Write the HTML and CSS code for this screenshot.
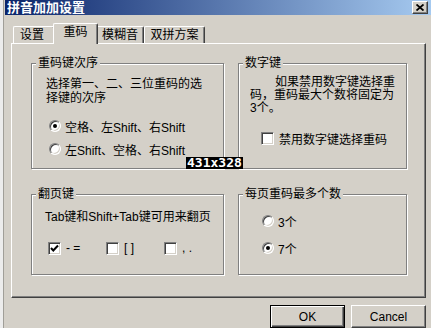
FILE: index.html
```html
<!DOCTYPE html>
<html lang="zh-CN">
<head>
  <meta charset="UTF-8">
  <title>拼音加加设置</title>
  <link rel="stylesheet" href="styles.css">
</head>
<body>
  <div class="window">
    <div class="titlebar">
      <span class="title">拼音加加设置</span>
      <span class="close-btn">
        <svg width="8" height="7" viewBox="0 0 8 7"><path d="M0.5 0.5 L7.5 6.5 M7.5 0.5 L0.5 6.5" stroke="#000" stroke-width="1.8"/></svg>
      </span>
    </div>

    <div class="dialog">
      <div class="tabs">
        <div class="tab tab-1">设置</div>
        <div class="tab tab-2 active">重码</div>
        <div class="tab tab-3">模糊音</div>
        <div class="tab tab-4">双拼方案</div>
      </div>

      <div class="panel">
        <div class="group">
          <div class="group-title">重码键次序</div>
          <p class="desc order-desc">选择第一、二、三位重码的选择键的次序</p>
          <div class="option order-first"><span class="radio checked"></span>空格、左Shift、右Shift</div>
          <div class="option order-second"><span class="radio"></span>左Shift、空格、右Shift</div>
        </div>

        <div class="group">
          <div class="group-title">数字键</div>
          <p class="desc digit-desc">如果禁用数字键选择重码，重码最大个数将固定为3个。</p>
          <div class="option digit-check"><span class="checkbox"></span>禁用数字键选择重码</div>
        </div>

        <div class="group">
          <div class="group-title">翻页键</div>
          <p class="desc page-desc">Tab键和Shift+Tab键可用来翻页</p>
          <div class="page-keys">
            <div class="option page-opt"><span class="checkbox checked">
              <svg width="11" height="11" viewBox="0 0 11 11"><path d="M2 5 L4.3 7.5 L9 2.5" fill="none" stroke="#000" stroke-width="2"/></svg>
            </span>- =</div>
            <div class="option page-opt"><span class="checkbox"></span>[ ]</div>
            <div class="option page-opt"><span class="checkbox"></span>, .</div>
          </div>
        </div>

        <div class="group">
          <div class="group-title">每页重码最多个数</div>
          <div class="option count-first"><span class="radio"></span>3个</div>
          <div class="option count-second"><span class="radio checked"></span>7个</div>
        </div>
      </div>

      <div class="buttons">
        <button class="btn default">OK</button>
        <button class="btn">Cancel</button>
      </div>
    </div>
  </div>

  <div class="size-tag">431x328</div>
</body>
</html>
```

FILE: styles.css
```css
body {
  margin: 0;
  background-color: #ececec;
  font-family: "Liberation Sans", "Noto Sans CJK SC", sans-serif;
  font-size: 12px;
  color: #000;
  overflow: hidden;
}

.window {
  margin-left: 3px;
  border-left: 1px solid #a09e98;
  height: 328px;
  background-color: #d4d0c8;
  overflow: hidden;
}

/* title bar */
.titlebar {
  margin-left: 1px;
  height: 15px;
  padding: 0 3px 0 2px;
  display: flex;
  justify-content: space-between;
  align-items: flex-start;
  background: linear-gradient(to right, #0a246a, #a6caf0);
}
.title {
  color: white;
  font-weight: bold;
  font-size: 13px;
  line-height: 15px;
}
.close-btn {
  width: 16px;
  height: 13px;
  margin-top: 1px;
  box-sizing: border-box;
  display: flex;
  justify-content: center;
  align-items: center;
  background-color: #d4d0c8;
  border: 1px solid;
  border-color: #fff #404040 #404040 #fff;
  box-shadow: inset -1px -1px 0 #808080;
}

.dialog {
  padding: 8px 5px 0 7px;
}

/* tabs */
.tabs {
  display: flex;
  align-items: flex-end;
  height: 20px;
  padding-left: 2px;
}
.tab {
  height: 17px;
  box-sizing: border-box;
  line-height: 16px;
  text-align: center;
  background-color: #d4d0c8;
  border-top: 1px solid #fff;
  border-left: 1px solid #fff;
  border-right: 1px solid #404040;
  border-top-left-radius: 2px;
  border-top-right-radius: 2px;
  box-shadow: inset -1px 0 0 #808080;
}
.tab-1 { width: 42px; padding-right: 4px; }
.tab-2 { width: 41px; }
.tab-3 { width: 48px; }
.tab-4 { width: 61px; }
.tab.active {
  position: relative;
  z-index: 1;
  width: 45px;
  height: 21px;
  margin: 0 -2px -1px -2px;
}

/* panel */
.panel {
  height: 255px;
  box-sizing: border-box;
  border-top: 1px solid #fff;
  border-left: 1px solid #fff;
  border-right: 1px solid #404040;
  border-bottom: 1px solid #404040;
  box-shadow: inset -1px -1px 0 #808080;
  padding: 19px 0 0 19px;
  display: grid;
  grid-template-columns: 193px 169px;
  grid-template-rows: 106px 81px;
  column-gap: 14px;
  row-gap: 25px;
}

.group {
  border: 1px solid #808080;
  box-shadow: inset 1px 1px 0 #fff, 1px 1px 0 #fff;
}
.group-title {
  width: fit-content;
  margin: -8px 0 0 4px;
  padding: 0 2px;
  line-height: 14px;
  background-color: #d4d0c8;
}

.desc {
  margin: 0;
  line-height: 14px;
}
.order-desc {
  margin-top: 7px;
  padding: 0 17px 0 14px;
}
.digit-desc {
  margin-top: 6px;
  margin-left: 11px;
  width: 146px;
  line-height: 13px;
  text-indent: 25px;
}
.page-desc {
  margin-top: 9px;
  padding-left: 13px;
  white-space: nowrap;
}

.option {
  display: flex;
  align-items: center;
  height: 16px;
  white-space: nowrap;
}
.order-first { margin-top: 13px; padding-left: 17px; }
.order-second { margin-top: 7px; padding-left: 17px; }
.digit-check { margin-top: 15px; padding-left: 22px; }
.count-first { margin-top: 12px; padding-left: 23px; }
.count-second { margin-top: 11px; padding-left: 23px; }

.page-keys {
  display: flex;
  margin-top: 16px;
  padding-left: 16px;
}
.page-opt {
  width: 58px;
}

/* radio and checkbox */
.radio {
  width: 12px;
  height: 12px;
  box-sizing: border-box;
  margin-right: 4px;
  border-radius: 50%;
  background-color: white;
  border: 1px solid;
  border-color: #808080 #fff #fff #808080;
  box-shadow: inset 1px 1px 0 #404040, inset -1px -1px 0 #d4d0c8;
  display: flex;
  justify-content: center;
  align-items: center;
}
.radio.checked::after {
  content: "";
  width: 4px;
  height: 4px;
  border-radius: 50%;
  background-color: #000;
}

.checkbox {
  width: 13px;
  height: 13px;
  box-sizing: border-box;
  margin-right: 5px;
  background-color: white;
  border: 1px solid;
  border-color: #808080 #fff #fff #808080;
  box-shadow: inset 1px 1px 0 #404040, inset -1px -1px 0 #d4d0c8;
  display: flex;
  justify-content: center;
  align-items: center;
}

/* buttons */
.buttons {
  display: flex;
  justify-content: flex-end;
  gap: 6px;
  margin-top: 7px;
}
.btn {
  width: 75px;
  height: 23px;
  padding: 0;
  font-family: "Liberation Sans", sans-serif;
  font-size: 12px;
  color: #000;
  background-color: #d4d0c8;
  border: 1px solid;
  border-color: #fff #404040 #404040 #fff;
  box-shadow: inset -1px -1px 0 #808080;
}
.btn.default {
  border: 1px solid #000;
  box-shadow: inset 1px 1px 0 #fff, inset -1px -1px 0 #404040, inset -2px -2px 0 #808080;
}

/* dimension tag drawn over the picture */
.size-tag {
  position: absolute;
  left: 186px;
  top: 157px;
  padding: 0 1px;
  background-color: #000;
  color: white;
  font-family: "DejaVu Sans Mono", monospace;
  font-weight: bold;
  font-size: 13px;
  line-height: 12px;
}
```
